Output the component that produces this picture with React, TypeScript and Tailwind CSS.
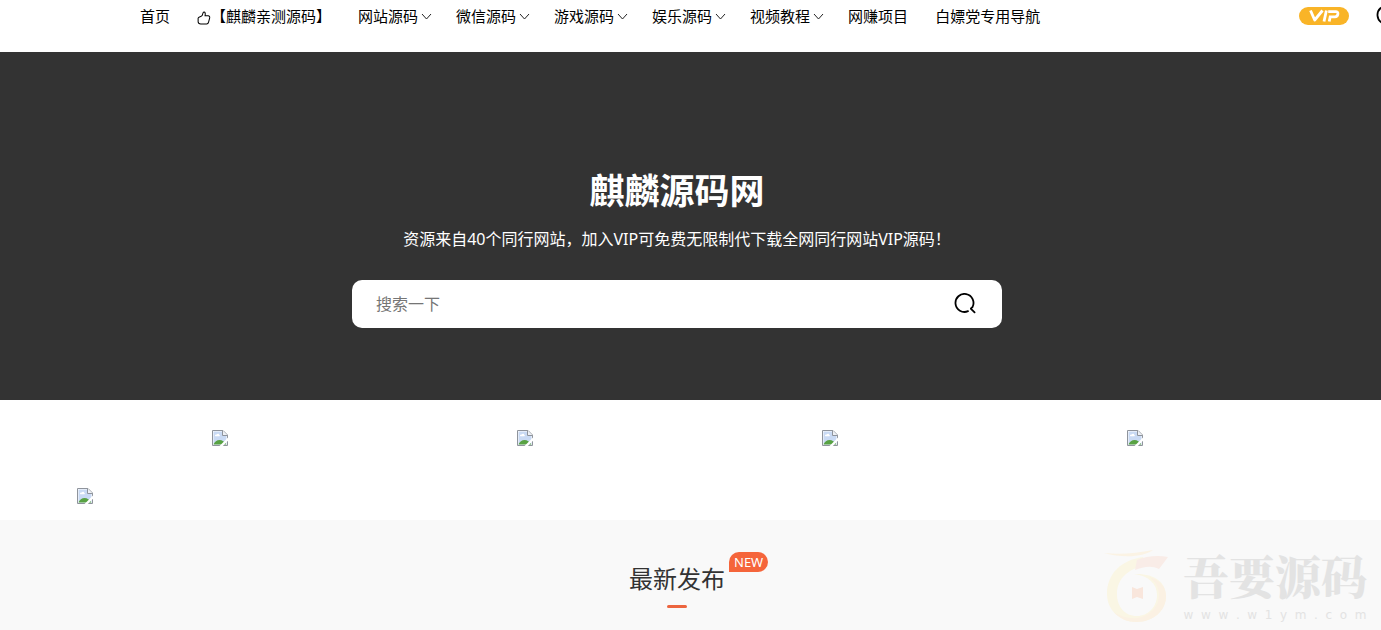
import React from "react";

type NavEntry = { label: string; menu?: boolean; thumb?: boolean };

const navEntries: NavEntry[] = [
  { label: "首页" },
  { label: "【麒麟亲测源码】", thumb: true },
  { label: "网站源码", menu: true },
  { label: "微信源码", menu: true },
  { label: "游戏源码", menu: true },
  { label: "娱乐源码", menu: true },
  { label: "视频教程", menu: true },
  { label: "网赚项目" },
  { label: "白嫖党专用导航" },
];

function ThumbIcon() {
  return (
    <svg className="mt-[3px] h-[14px] w-[14px] shrink-0" viewBox="0 0 15 15" fill="none" stroke="#000" strokeWidth="1.1" strokeLinejoin="round" aria-hidden="true">
      <path d="M1.2 7.6C1.8 6.2 4.6 6.2 5.5 4.8C6.2 3.8 6 1.5 7.3 1.2C8.8 1 9.2 2.6 8.6 5.2H12C13.3 5.3 13.8 6.3 13.6 7.4L12.4 12C12.1 13.3 11.5 14 10.3 14H4C2.4 14 1.3 13.2 1.2 11.6V7.6Z" />
    </svg>
  );
}

function ChevronIcon() {
  return (
    <svg className="-mr-[3px] ml-[3px] h-[11px] w-[11px] shrink-0" viewBox="0 0 11 11" fill="none" stroke="#222" strokeWidth="1" aria-hidden="true">
      <path d="M1 3L5.5 8L10 3" />
    </svg>
  );
}

function SearchIcon() {
  return (
    <svg className="h-[22px] w-[22px]" viewBox="0 0 22 22" fill="none" stroke="#000" strokeWidth="1.8" strokeLinecap="round" aria-hidden="true">
      <path d="M14 18.2A9 9 0 1 1 18.4 14.2L17 15.4" />
      <path d="M17 15.8L20.6 19.4" />
    </svg>
  );
}

function MissingPicture() {
  return (
    <svg className="h-4 w-4" viewBox="0 0 16 16" aria-hidden="true">
      <path d="M0.5 0.5H11L15.5 5V15.5H0.5Z" fill="#fff" />
      <path d="M1.5 1.5H10.5V5.5H14.5V14.5H1.5Z" fill="#c9daf4" />
      <path d="M3 6C2.8 4.8 3.9 4.1 4.7 4.6C5.3 3.3 7.3 3.7 7.3 5.1C8.1 5.2 8.1 6.2 7.4 6.3H3.5Z" fill="#fff" />
      <path d="M1.5 14.5C2.5 12 4.8 10 7.6 10C10.2 10 12.5 11.5 14.5 14.5Z" fill="#58a243" />
      <path d="M0.5 15.5V0.5H11L15.5 5V15.5Z" fill="none" stroke="#8f949c" />
      <path d="M10.5 0.5V5.5H15.5" fill="#eef1f6" stroke="#8f949c" />
      <path d="M7.5 16L16 7.6V10.8L10.8 16Z" fill="#fff" />
    </svg>
  );
}

function VipBadge() {
  return (
    <svg className="h-[18px] w-[50px]" viewBox="0 0 50 18" aria-hidden="true">
      <rect width="50" height="18" rx="9" fill="#f9b427" />
      <g fill="none" stroke="#fff" strokeWidth="2.8">
        <path d="M11.5 3.5L15.7 13L23.5 3.5" strokeLinejoin="round" />
        <path d="M27.4 3.5L25 14.5" />
        <path d="M29.2 4.6H37.2C40 4.6 39.2 9.8 36 9.8H31.2L30.2 14.5" />
      </g>
    </svg>
  );
}

function Watermark() {
  return (
    <div className="pointer-events-none absolute right-[14px] bottom-[6px] flex items-end gap-[14px]">
      <svg className="h-[76px] w-[66px]" viewBox="0 0 66 76" fill="none" aria-hidden="true">
        <path d="M1 5C18 7 34 5 50 2C43 8 22 11 1 5Z" fill="#fbf3e4" />
        <path d="M40 9C18 12 4 26 4 46C4 62 17 74 33 74C50 74 63 63 63 48C63 34 51 25 31 26C46 28 54 36 54 47C54 59 45 68 34 68C22 68 14 59 14 46C14 30 26 21 42 17Z" fill="#faf6e4" />
        <path d="M46 29C57 32 63 39 63 48C63 63 50 74 33 74C24 74 16 70 11 64C17 68 26 71 34 70C47 68 56 59 56 47C56 39 52 33 46 29Z" fill="#fbf1e3" />
        <path d="M34 12C43 8 55 7 65 9L56 21C48 17 40 19 32 22Z" fill="#f9ece7" />
        <path d="M29 39L34 41L40 39V51L34 49L29 51Z" fill="#f9e6dc" />
      </svg>
      <div className="flex flex-col items-center text-[#e3e3e3]">
        <span className="font-['Noto_Serif_CJK_SC','Noto_Sans_CJK_SC',serif] text-[46px] leading-[64px] font-black">吾要源码</span>
        <span className="font-['DejaVu_Sans',sans-serif] text-xs leading-[18px] whitespace-pre">w  w  w  .  w  1  y  m  .  c  o  m</span>
      </div>
    </div>
  );
}

export default function App() {
  return (
    <div className="flex min-h-screen flex-col overflow-x-hidden bg-white font-['Noto_Sans','Noto_Sans_CJK_SC',sans-serif] text-black">
      <header className="flex h-[52px] items-start overflow-hidden pt-1 pl-[140px]">
        <nav className="flex shrink-0 gap-[27px] text-[15px] leading-6 whitespace-nowrap">
          {navEntries.map((entry) => (
            <a key={entry.label} href="#" className="flex items-center">
              {entry.thumb && <ThumbIcon />}
              {entry.label}
              {entry.menu && <ChevronIcon />}
            </a>
          ))}
        </nav>
        <div className="-mr-[17px] ml-auto flex h-6 shrink-0 items-center gap-[27px]">
          <a href="#" aria-label="VIP">
            <VipBadge />
          </a>
          <button type="button" aria-label="搜索">
            <SearchIcon />
          </button>
        </div>
      </header>

      <section className="flex flex-col items-center bg-[#333] pt-[119px] pr-[27px] pb-[72px] text-white">
        <h1 className="text-[35px] leading-10 font-bold">麒麟源码网</h1>
        <p className="mt-4 text-base">资源来自40个同行网站，加入VIP可免费无限制代下载全网同行网站VIP源码！</p>
        <form className="mt-[29px] flex h-12 w-full max-w-[650px] items-center rounded-[10px] bg-white pr-[26px] pl-6" onSubmit={(e) => e.preventDefault()}>
          <input type="text" aria-label="搜索一下" placeholder="搜索一下" className="min-w-0 flex-1 bg-transparent text-base text-black outline-none placeholder:text-[#757575]" />
          <button type="submit" aria-label="搜索">
            <SearchIcon />
          </button>
        </form>
      </section>

      <section className="pr-[27px]">
        <div className="mx-auto max-w-[1200px] pt-[30px] pb-4">
          <div className="grid grid-cols-4 gap-5">
            {[1, 2, 3, 4].map((n) => (
              <a key={n} href="#" aria-label={`推荐 ${n}`} className="flex justify-center">
                <MissingPicture />
              </a>
            ))}
          </div>
          <a href="#" aria-label="广告" className="mt-[42px] flex">
            <MissingPicture />
          </a>
        </div>
      </section>

      <section className="relative flex flex-1 flex-col items-center bg-[#f9f9f9] pt-[43px] pr-[27px] pb-[21px]">
        <h2 className="relative text-2xl text-[#333]">
          最新发布
          <span className="absolute -top-[11px] left-full ml-1 rounded-[10px] rounded-bl-none bg-[#f5653b] px-[5px] text-[13px] leading-5 text-white">NEW</span>
        </h2>
        <span className="mt-[10px] h-[3px] w-5 rounded-full bg-[#ec653f]" />
        <Watermark />
      </section>
    </div>
  );
}
